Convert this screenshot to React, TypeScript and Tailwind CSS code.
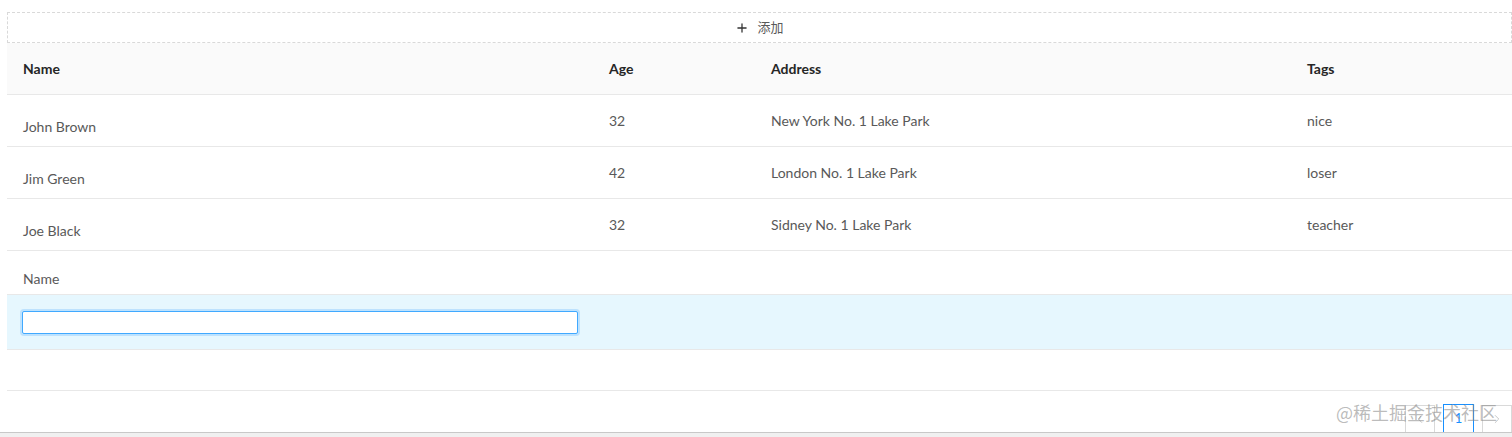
import { Plus, ChevronLeft, ChevronRight } from 'lucide-react'

const rows = [
  { name: 'John Brown', age: 32, address: 'New York No. 1 Lake Park', tag: 'nice' },
  { name: 'Jim Green', age: 42, address: 'London No. 1 Lake Park', tag: 'loser' },
  { name: 'Joe Black', age: 32, address: 'Sidney No. 1 Lake Park', tag: 'teacher' },
]

const cols = 'grid grid-cols-[586px_162px_536px_1fr]'

export default function App() {
  return (
    <div
      className="relative h-[437px] w-[1512px] overflow-hidden bg-white text-[14px] text-[#595959]"
      style={{ fontFamily: 'Lato, "Noto Sans CJK SC", sans-serif' }}
    >
      <div className="pl-[7px] pt-[12px]">
        <button
          type="button"
          className="flex h-[31px] w-full items-center justify-center gap-[8px] border border-dashed border-[#d9d9d9] bg-white text-[#595959]"
        >
          <Plus className="h-[14px] w-[14px] text-[#333]" strokeWidth={2.2} />
          <span className="text-[13px]">添加</span>
        </button>

        <div className={`${cols} h-[52px] items-center border-b border-[#e8e8e8] bg-[#fafafa] font-bold text-[#262626]`}>
          <div className="px-4">Name</div>
          <div className="px-4">Age</div>
          <div className="px-4">Address</div>
          <div className="px-4">Tags</div>
        </div>

        {rows.map((r) => (
          <div key={r.name} className={`${cols} h-[52px] items-center border-b border-[#e8e8e8]`}>
            <div className="px-4 pt-[12px]">{r.name}</div>
            <div className="px-4">{r.age}</div>
            <div className="px-4">{r.address}</div>
            <div className="px-4">{r.tag}</div>
          </div>
        ))}

        <div className="flex h-[43px] items-center px-4 pt-[12px]">Name</div>
        <div className={`${cols} h-[56px] items-center border-y border-[#e8e8e8] bg-[#e6f7fe]`}>
          <div className="px-[15px]">
            <input
              className="h-[23px] w-full rounded-[2px] border border-[#40a9ff] bg-white shadow-[0_0_0_2px_rgba(24,144,255,0.2)] outline-none"
              autoFocus
            />
          </div>
        </div>
        <div className="h-[41px] border-b border-[#e8e8e8]" />

        <div className="flex h-[41px] items-end justify-end gap-[8px]">
          <div className="flex h-[27px] w-[30px] items-center justify-center border border-b-0 border-[#d9d9d9] text-[#bfbfbf]">
            <ChevronLeft className="h-[14px] w-[14px]" strokeWidth={1.5} />
          </div>
          <div className="flex h-[28px] w-[31px] items-center justify-center border border-b-0 border-[#1890ff] text-[13px] text-[#1890ff]">
            1
          </div>
          <div className="flex h-[27px] w-[30px] items-center justify-center border border-b-0 border-[#d9d9d9] text-[#bfbfbf]">
            <ChevronRight className="h-[14px] w-[14px]" strokeWidth={1.5} />
          </div>
        </div>
      </div>

      <div className="h-[5px] border-t border-[#c8c8c8] bg-[#f0f0f0]" />

      <div
        className="pointer-events-none absolute left-[1336px] top-[399px] text-[18px] text-[rgba(130,130,130,0.55)]"
        style={{ fontFamily: '"Noto Sans CJK SC", sans-serif' }}
      >
        @稀土掘金技术社区
      </div>
    </div>
  )
}
